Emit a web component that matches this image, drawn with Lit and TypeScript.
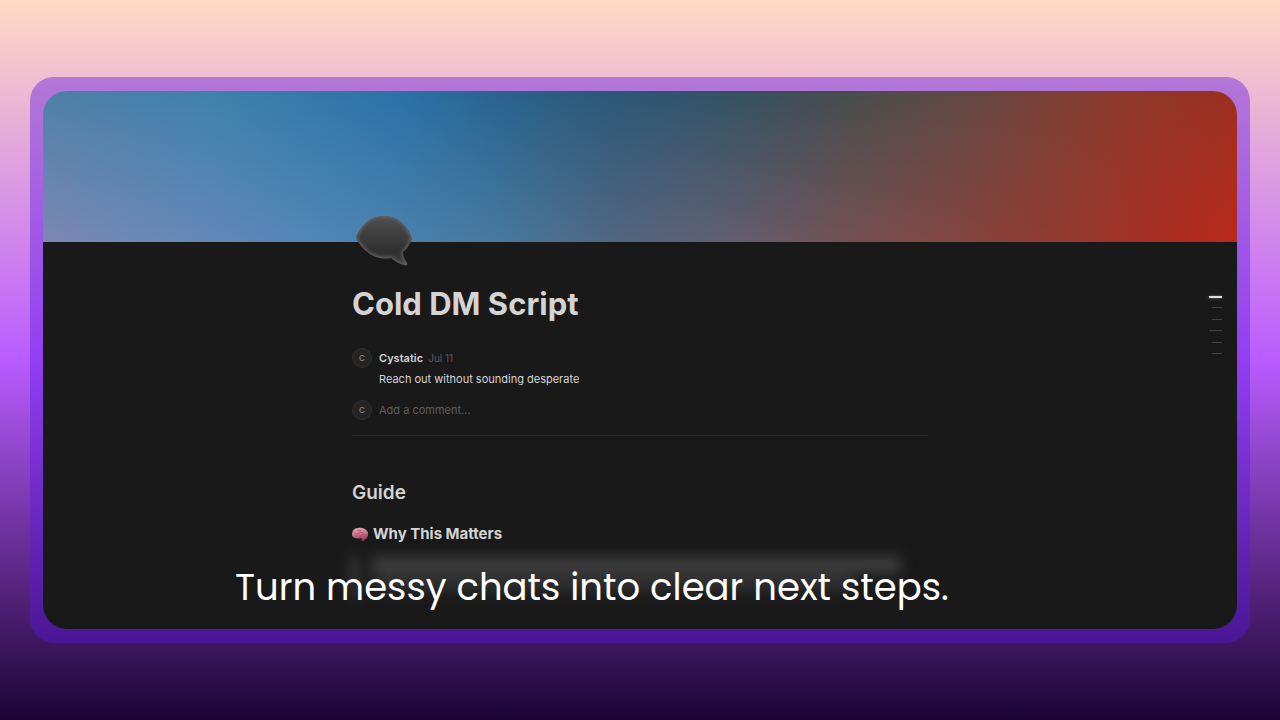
import { LitElement, html, css, svg } from "lit";
import { customElement } from "lit/decorators.js";

const sections = [
  { label: "Cold DM Script", kind: "current" },
  { label: "Guide", kind: "short" },
  { label: "Why This Matters", kind: "short" },
  { label: "Templates", kind: "long" },
  { label: "Opening", kind: "short" },
  { label: "Follow up", kind: "short" },
];

const bubble = svg`
  <defs>
    <linearGradient id="fill" x1="0" y1="0" x2="0" y2="1">
      <stop offset="0" stop-color="#505050" />
      <stop offset="0.7" stop-color="#303030" />
      <stop offset="1" stop-color="#3c3c3c" />
    </linearGradient>
    <filter id="soft"><feGaussianBlur stdDeviation="1.5" /></filter>
    <clipPath id="shape">
      <path d="M28 1C41 1 50 9 55 21C56 23 56 25 54 28C52 32 50 35 47 37C47 42 49 45 51 48C52 50 50 51 48 50C43 49 39 46 35 43C20 46 8 37 1 25C0 23 0 21 2 18C7 8 16 1 28 1Z" />
    </clipPath>
  </defs>
  <g clip-path="url(#shape)">
    <path fill="url(#fill)" d="M0 0H56V52H0Z" />
    <path fill="none" stroke="#646464" stroke-width="3" filter="url(#soft)" d="M28 1C41 1 50 9 55 21C56 23 56 25 54 28C52 32 50 35 47 37C47 42 49 45 51 48C52 50 50 51 48 50C43 49 39 46 35 43C20 46 8 37 1 25C0 23 0 21 2 18C7 8 16 1 28 1Z" />
  </g>`;

const brain = svg`
  <defs>
    <linearGradient id="pink" x1="0" y1="0" x2="0.3" y2="1">
      <stop offset="0" stop-color="#eeb0be" />
      <stop offset="0.6" stop-color="#cf7590" />
      <stop offset="1" stop-color="#a64863" />
    </linearGradient>
  </defs>
  <path fill="#963650" d="M9 10L13 10L12 14L10 14Z" />
  <path fill="url(#pink)" d="M6 1C10 0 14 2 15 4C17 6 16 10 14 12C12 13 10 12 9 11C6 12 1 12 0 8C0 4 2 1 6 1Z" />
  <path fill="none" stroke="#a94b68" stroke-width="0.7" d="M2 7C4 5 5 8 7 6S10 7 12 5M5 3C6 5 8 2 9 4M3 9C6 8 8 10 10 8S13 9 14 8" />`;

@customElement("app-root")
export class AppRoot extends LitElement {
  static styles = css`
    :host {
      display: flex;
      flex-direction: column;
      justify-content: center;
      box-sizing: border-box;
      min-height: 100vh;
      padding: 0 30px;
      font-family: Inter, "Liberation Sans", sans-serif;
      color: #d4d4d4;
      background: linear-gradient(#ffdac4, #b95cff 50%, #1b0433);
    }
    .frame {
      padding: 14px 13px;
      border-radius: 24px;
      background: rgba(92, 22, 225, 0.42);
    }
    .page {
      position: relative;
      overflow: hidden;
      border-radius: 24px;
      background: linear-gradient(transparent 100px, #191919 100px);
    }
    .cover {
      height: 151px;
      background: linear-gradient(90deg, #4f80a8, #3f82ac 14%, #2a72a8 30%, #29628c 39%, #2c5877 48%, #345366 57%, #414e56 64%, #4a4d4d 68%, #5f4a45 76%, #8d3a2c 90%, #9c3020);
    }
    .glow {
      height: 100%;
      background: linear-gradient(90deg, #7c87b5, #6488b8 13%, #4f86b4 24%, #4779a0 38%, #52667f 48%, #5f6074 56%, #70545a 65%, #834640 76%, #94392f 86%, #aa2c20 94%, #b82a1b);
      mask-image: linear-gradient(transparent, #000);
    }
    .doc {
      max-width: 576px;
      margin: 0 auto;
      padding-bottom: 32px;
    }
    .bubble {
      display: block;
      position: relative;
      width: 56px;
      height: 52px;
      margin: -27px 0 0 4px;
    }
    h1, h2, h3, p { margin: 0; }
    h1 {
      margin-top: 16px;
      font-size: 31px;
      line-height: 42px;
      font-weight: 700;
    }
    .comment {
      display: grid;
      grid-template-columns: 20px 1fr;
      column-gap: 7px;
      align-items: center;
      font-size: 11px;
      line-height: 20px;
    }
    .first { margin-top: 23px; }
    .second { margin-top: 10px; }
    .avatar {
      box-sizing: border-box;
      width: 20px;
      height: 20px;
      border: 1px solid #303030;
      border-radius: 50%;
      background: #242424;
      color: #8c8c8c;
      font-size: 8px;
      line-height: 18px;
      font-weight: 500;
      text-align: center;
    }
    .name { font-weight: 600; }
    .date { margin-left: 2px; color: #5a5a5a; font-size: 10px; }
    .text { grid-column: 2; line-height: 22px; }
    input {
      width: 100%;
      padding: 0;
      border: 0;
      outline: 0;
      background: none;
      color: inherit;
      font: inherit;
    }
    input::placeholder { color: #5f5f5f; opacity: 1; }
    hr {
      height: 1px;
      margin: 15px 0 0;
      border: 0;
      background: #2a2a2a;
    }
    h2 {
      margin-top: 45px;
      font-size: 19px;
      line-height: 24px;
      font-weight: 600;
    }
    h3 {
      display: flex;
      align-items: center;
      gap: 4px;
      margin-top: 19px;
      font-size: 15px;
      line-height: 20px;
      font-weight: 700;
    }
    .brain { width: 17px; height: 15px; }
    .haze {
      height: 40px;
      margin-top: 13px;
      padding-left: 16px;
      border-left: 4px solid #626262;
      filter: blur(7px);
    }
    .line { height: 16px; margin: 0 27px 2px 0; background: #404040; }
    .faint { height: 16px; margin-right: 75px; background: #303030; }
    nav {
      position: absolute;
      top: 200px;
      right: 15px;
      display: flex;
      flex-direction: column;
      justify-content: space-between;
      height: 68px;
    }
    .mark {
      display: flex;
      align-items: center;
      justify-content: flex-end;
      width: 14px;
      height: 11px;
    }
    .mark::before { content: ""; width: 10px; height: 1px; background: #414141; }
    .long::before { width: 13px; }
    .current::before { width: 13px; height: 2px; background: #ddd; box-shadow: 0 0 3px #777; }
    .caption {
      position: absolute;
      left: 192px;
      bottom: 18px;
      color: #fff;
      font-family: Poppins, Inter, sans-serif;
      font-size: 37px;
      line-height: 48px;
      font-weight: 400;
      white-space: nowrap;
    }
  `;

  render() {
    return html`
      <main class="frame">
        <article class="page">
          <div class="cover"><div class="glow"></div></div>
          <div class="doc">
            <svg class="bubble" viewBox="0 0 56 52" aria-hidden="true">${bubble}</svg>
            <h1>Cold DM Script</h1>
            <div class="comment first">
              <span class="avatar">C</span>
              <div><span class="name">Cystatic</span> <span class="date">Jul 11</span></div>
              <p class="text">Reach out without sounding desperate</p>
            </div>
            <label class="comment second">
              <span class="avatar">C</span>
              <input type="text" placeholder="Add a comment…" />
            </label>
            <hr />
            <h2>Guide</h2>
            <h3><svg class="brain" viewBox="0 0 17 15" aria-hidden="true">${brain}</svg>Why This Matters</h3>
            <div class="haze"><div class="line"></div><div class="faint"></div></div>
          </div>
          <nav>
            ${sections.map((s) => html`<a class="mark ${s.kind}" href="#" aria-label=${s.label}></a>`)}
          </nav>
          <p class="caption">Turn messy chats into clear next steps.</p>
        </article>
      </main>
    `;
  }
}
